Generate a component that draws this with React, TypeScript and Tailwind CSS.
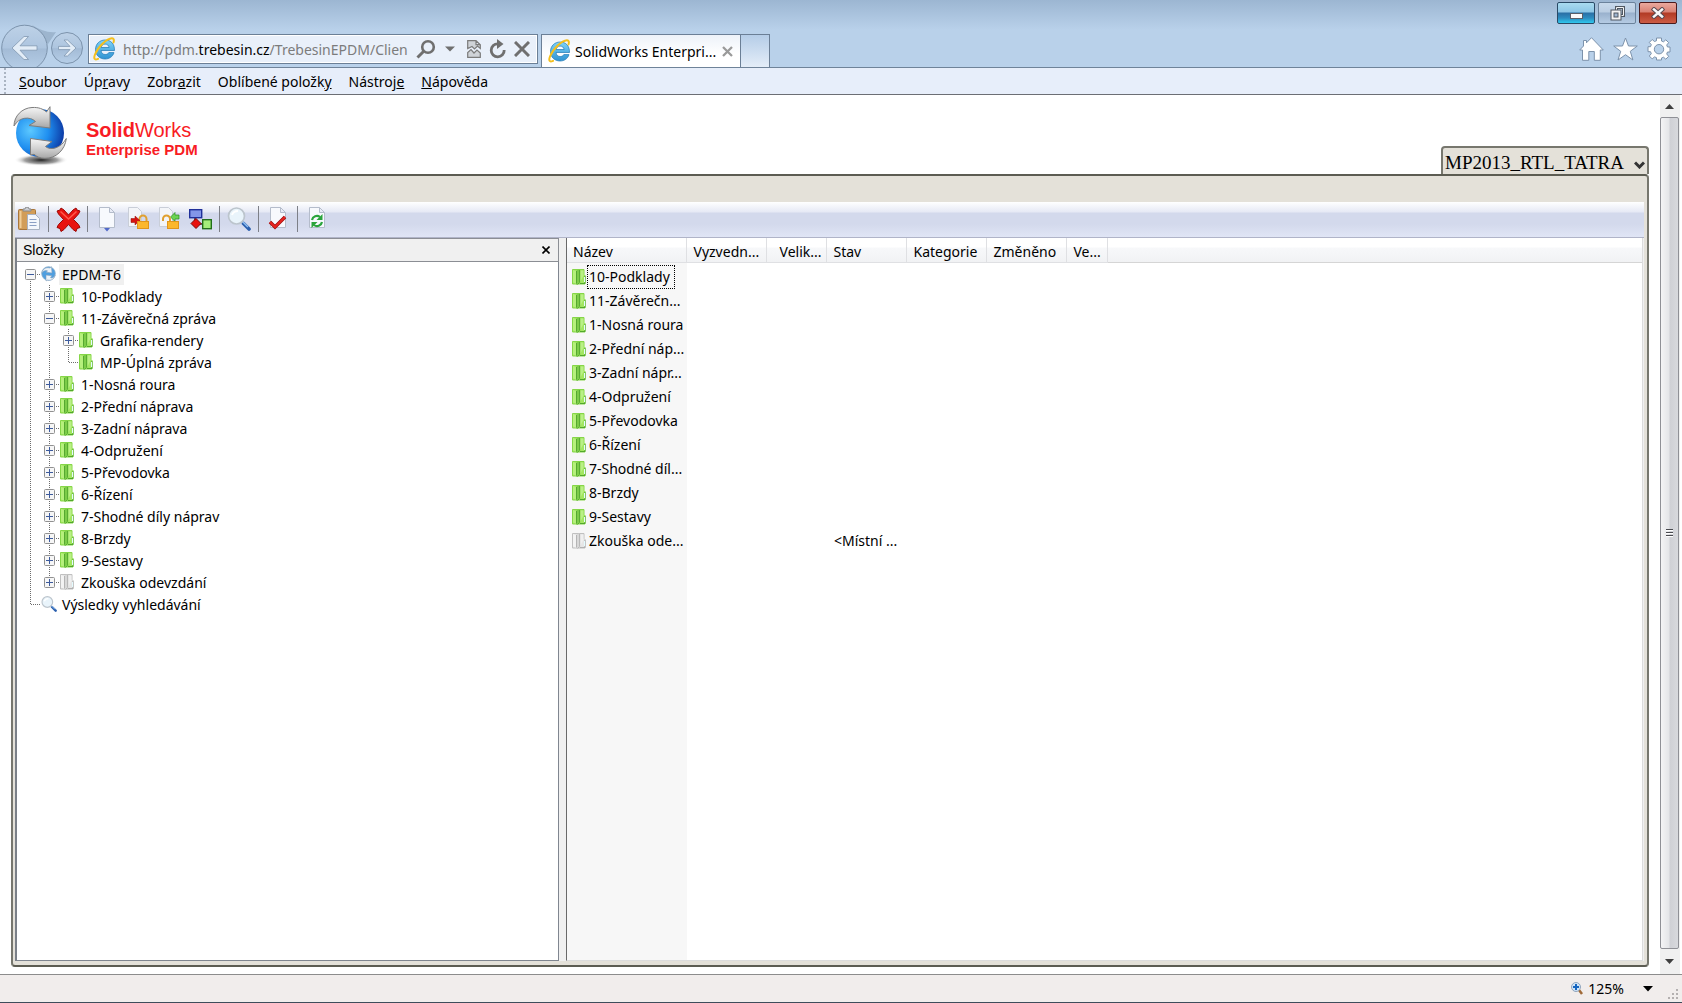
import React from 'react';

interface TreeNode {
    label: string;
    guides: string[]; // One entry per indent cell, last one holds the expander
    icon: 'vault' | 'green' | 'grey' | 'search';
    selected?: boolean;
}

// Guide kinds: line, plus, minus, minusTop (root), plusLast and end (last child without expander)
const treeNodes: TreeNode[] = [
    { label: 'EPDM-T6', guides: ['minusTop'], icon: 'vault', selected: true },
    { label: '10-Podklady', guides: ['line', 'plus'], icon: 'green' },
    { label: '11-Závěrečná zpráva', guides: ['line', 'minus'], icon: 'green' },
    { label: 'Grafika-rendery', guides: ['line', 'line', 'plus'], icon: 'green' },
    { label: 'MP-Úplná zpráva', guides: ['line', 'line', 'end'], icon: 'green' },
    { label: '1-Nosná roura', guides: ['line', 'plus'], icon: 'green' },
    { label: '2-Přední náprava', guides: ['line', 'plus'], icon: 'green' },
    { label: '3-Zadní náprava', guides: ['line', 'plus'], icon: 'green' },
    { label: '4-Odpružení', guides: ['line', 'plus'], icon: 'green' },
    { label: '5-Převodovka', guides: ['line', 'plus'], icon: 'green' },
    { label: '6-Řízení', guides: ['line', 'plus'], icon: 'green' },
    { label: '7-Shodné díly náprav', guides: ['line', 'plus'], icon: 'green' },
    { label: '8-Brzdy', guides: ['line', 'plus'], icon: 'green' },
    { label: '9-Sestavy', guides: ['line', 'plus'], icon: 'green' },
    { label: 'Zkouška odevzdání', guides: ['line', 'plusLast'], icon: 'grey' },
    { label: 'Výsledky vyhledávání', guides: ['end'], icon: 'search' },
];

const files = [
    { name: '10-Podklady', state: '' },
    { name: '11-Závěrečn...', state: '' },
    { name: '1-Nosná roura', state: '' },
    { name: '2-Přední náp...', state: '' },
    { name: '3-Zadní nápr...', state: '' },
    { name: '4-Odpružení', state: '' },
    { name: '5-Převodovka', state: '' },
    { name: '6-Řízení', state: '' },
    { name: '7-Shodné díl...', state: '' },
    { name: '8-Brzdy', state: '' },
    { name: '9-Sestavy', state: '' },
    { name: 'Zkouška ode...', state: '<Místní ...' },
];

const columns = [
    { label: 'Název', className: 'w-[119px] pl-[6px] text-left' },
    { label: 'Vyzvedn...', className: 'w-[80px] pl-[7px] text-left' },
    { label: 'Velik...', className: 'w-[60px] pr-[4px] text-right' },
    { label: 'Stav', className: 'w-[80px] pl-[7px] text-left' },
    { label: 'Kategorie', className: 'w-[80px] pl-[7px] text-left' },
    { label: 'Změněno', className: 'w-[80px] pl-[7px] text-left' },
    { label: 'Ve...', className: 'w-[41px] pl-[7px] text-left' },
];

const FolderIcon: React.FC<{ grey?: boolean }> = ({ grey }) => (
    <svg width="14" height="16" viewBox="0 0 14 16" className="shrink-0">
        <path d="M0.500 0.500h11.500v5l1 1v8.500h-12.500z" fill={grey ? '#e6e6e6' : '#a2e660'} stroke={grey ? '#c0c0c0' : '#86d648'} />
        <path d="M8 14.500h5V7" fill="none" stroke={grey ? '#b0b0b0' : '#52a82c'} />
        <path d="M8.500 1.500h3v5l-3 6z" fill={grey ? '#f0f0f0' : '#b9f086'} />
        <path d="M1 1l3.500 1.200v12.500L1 13.500z" fill={grey ? '#f3f3f3' : '#b6f07c'} />
        <path d="M4 2c.5-.8 2-1.200 3.500-1.200V13L5.500 15.500H4z" fill={grey ? '#d8d8d8' : '#7ccc48'} />
        <path d="M4.500 2v12.500M7.600 1v12.500l-2 2" fill="none" stroke={grey ? '#b4b4b4' : '#55a830'} />
        <path d="M12.500 8v5" stroke="#e4fbff" />
    </svg>
);

const VaultIcon: React.FC<{ size: string }> = ({ size }) => (
    <svg className={size} viewBox="0 0 54 61">
        <defs>
            <radialGradient id="ball" cx="0.3" cy="0.45" r="0.75">
                <stop offset="0" stopColor="#5cc8ff" />
                <stop offset="0.5" stopColor="#1f8ff0" />
                <stop offset="1" stopColor="#0a2f9c" />
            </radialGradient>
            <linearGradient id="steel" x1="0" y1="0" x2="0" y2="1">
                <stop offset="0" stopColor="#f6f6f6" />
                <stop offset="0.5" stopColor="#d2d2d2" />
                <stop offset="1" stopColor="#a6a6a6" />
            </linearGradient>
            <radialGradient id="shade">
                <stop offset="0" stopColor="#222" />
                <stop offset="0.6" stopColor="#777" stopOpacity="0.7" />
                <stop offset="1" stopColor="#fff" stopOpacity="0" />
            </radialGradient>
        </defs>
        <ellipse cx="28" cy="54" rx="27" ry="6" fill="url(#shade)" />
        <circle cx="27" cy="27" r="24" fill="url(#ball)" />
        <path d="M1 20C1 10 9 2 19 1.500c7-.4 11 1.500 14.500 4.500L37 0.700V22l-21-2.500 6.500-4C17 10 6 11 1 20z" fill="url(#steel)" stroke="#7d7d7d" strokeWidth="1" />
        <path d="M53.300 32.500C52 44 43 52.500 32 52.300c-5 0-8-1.500-11-4L17.500 49V32.500L39 35.500l-6.500 5C38 45 48 42 53.300 32.500z" fill="url(#steel)" stroke="#7d7d7d" strokeWidth="1" />
    </svg>
);

const SmallVaultIcon: React.FC = () => (
    <svg width="15" height="16" viewBox="0 0 15 16">
        <circle cx="7.500" cy="7.500" r="6.800" fill="#4f9fe0" stroke="#86a9c8" strokeWidth="0.800" />
        <path d="M1 7C1.500 3 5 .800 9 2l1.500-1.300.5 6.300-6-.8L6.500 5C4.500 4 2 5 1 7z" fill="#eef3f8" stroke="#7f9fbd" strokeWidth="0.600" />
        <path d="M14 9c-.5 4-4 6-7.500 5L5 15V9l6 .8L9.500 11.500c1.500 1 3.500 0 4.500-2.500z" fill="#eef3f8" stroke="#7f9fbd" strokeWidth="0.600" />
    </svg>
);

const SearchIcon: React.FC<{ size: string }> = ({ size }) => (
    <svg className={size} viewBox="0 0 24 24">
        <path d="M16.500 16.500l5.500 5.500" stroke="#2a5fae" strokeWidth="3.600" strokeLinecap="round" />
        <path d="M15 14l6 6" stroke="#8fbdf0" strokeWidth="1.500" />
        <circle cx="9.500" cy="9" r="8" fill="#e9f4fb" stroke="#bcc5cd" strokeWidth="1.700" />
        <path d="M5 8c1-3 3-4 6-4" stroke="#fff" strokeWidth="2" fill="none" />
    </svg>
);

const IeIcon: React.FC = () => (
    <svg width="22" height="24" viewBox="0 0 22 24" className="shrink-0">
        <defs>
            <linearGradient id="ie" x1="0" y1="0" x2="0" y2="1">
                <stop offset="0" stopColor="#7fd3f7" />
                <stop offset="1" stopColor="#2f93d2" />
            </linearGradient>
        </defs>
        <path
            d="M21.500 13.500H8c.3 2.600 2 4 4.200 4 1.700 0 2.900-.6 3.600-1.900h5.200c-1.200 4-4.600 6.400-8.900 6.400C6.600 22 2.500 18.200 2.500 12.600S6.600 3 12.100 3c5.900 0 9.600 4 9.400 10.500zM8.100 10.500h8c-.3-2.100-1.800-3.400-4-3.400s-3.600 1.300-4 3.400z"
            fill="url(#ie)" stroke="#1c77b5" strokeWidth="0.700"
        />
        <path d="M20.500 5.500c.8-2.600.3-4.300-1.600-4.200C14 1.600 5 9.500 2 17.500c-1.500 4-.6 6 3 4.300" fill="none" stroke="#f4bf1c" strokeWidth="2" strokeLinecap="round" />
    </svg>
);

const Guide: React.FC<{ kind: string }> = ({ kind }) => {
    const top = kind !== 'minusTop';
    const bottom = kind !== 'end' && kind !== 'plusLast';
    const box = kind.startsWith('plus') || kind.startsWith('minus');
    return (
        <svg width="19" height="22" viewBox="0 0 19 22" className="shrink-0">
            <g stroke="#6c6c6c" strokeDasharray="1 1">
                {top && <path d="M9.500 0v11" />}
                {bottom && <path d="M9.500 12v10" />}
                {kind !== 'line' && <path d="M10 11.500h9" />}
            </g>
            {box && (
                <>
                    <rect x="4.500" y="6.500" width="10" height="10" rx="1" fill="#f6f6f6" stroke="#919191" />
                    <path d="M6 11.500h7" stroke="#3c5a9c" />
                    {kind.startsWith('plus') && <path d="M9.500 8v7" stroke="#3c5a9c" />}
                </>
            )}
        </svg>
    );
};

// Blank sheet used by several toolbar icons
const Sheet: React.FC = () => (
    <path d="M2.500 0.500h10l5 5v15h-15z M12.500 0.500v5h5" fill="#f7f9fd" stroke="#b4bccb" />
);

const Separator: React.FC = () => <span className="mx-[7px] h-[26px] w-px bg-[#7d8088]" />;

const ToolButton: React.FC<{ label: string; children: React.ReactNode }> = ({ label, children }) => (
    <button aria-label={label} className="flex h-[26px] w-6 items-center justify-center">
        {children}
    </button>
);

const Toolbar: React.FC = () => (
    <div className="flex h-9 shrink-0 items-center border-b border-[#b0b4c8] bg-[linear-gradient(to_bottom,#fff_0px,#e6e9f5_10px,#d3d9ec_11px,#d3d9ec_22px,#e0e5f5_35px)] pb-px pl-[2px]">
        <ToolButton label="Vložit">
            <svg width="22" height="24" viewBox="0 0 22 24">
                <rect x="0.500" y="2.500" width="17" height="20" rx="1" fill="#d29d58" stroke="#a8763a" />
                <path d="M2.500 4v17" stroke="#f0cd96" strokeWidth="2" />
                <path d="M5 4h8v-2h-2a2 2 0 0 0-4 0h-2z" fill="#c9ccd2" stroke="#888" />
                <path d="M9.500 7.500h8l4 4v11h-12z" fill="#f4f7fc" stroke="#a9b2c1" />
                <path d="M11.500 12.500h7M11.500 15.500h7M11.500 18.500h7" stroke="#8ca0c4" />
            </svg>
        </ToolButton>
        <Separator />
        <ToolButton label="Odstranit">
            <svg width="25" height="25" viewBox="0 0 25 25" className="shrink-0">
                <path d="M1 4l3-1 1-2 3 2 4.500 5L17 3l3-2 1 2 3 1-1.500 3-5 5.500 5 5 1.500 3-3 1-1 3-3-2-4.500-5-4.500 5-3 2-1-3-3-1 1.500-3 5-5-5-5.500z" fill="#e81310" stroke="#9c0806" />
                <path d="M4.500 4.500l8 7.500 8-7.500" stroke="#ff5a4c" strokeWidth="1.500" fill="none" />
            </svg>
        </ToolButton>
        <Separator />
        <div className="flex gap-[7px]">
            <ToolButton label="Nový">
                <svg width="20" height="25" viewBox="0 0 20 25">
                    <Sheet />
                    <path d="M7 21h6l-3 3.500z" fill="#5169c9" />
                </svg>
            </ToolButton>
            <ToolButton label="Uzamknout">
                <svg width="22" height="24" viewBox="0 0 22 24">
                    <path d="M1.500 0.500h9l4 4v15h-13z" fill="#f3f5f9" stroke="#c9ced8" />
                    <path d="M12.500 14v-2a3.500 3.500 0 0 1 7 0v2" fill="none" stroke="#e0a030" strokeWidth="2" />
                    <path d="M4 11.500h4V9l5 4.500L8 18v-2.500H4z" fill="#d81410" stroke="#8f0a08" strokeWidth="0.500" />
                    <rect x="10.500" y="14.500" width="11" height="7" fill="#fcb72d" stroke="#e0951c" />
                </svg>
            </ToolButton>
            <ToolButton label="Odemknout">
                <svg width="22" height="24" viewBox="0 0 22 24">
                    <path d="M1.500 0.500h9l4 4v15h-13z" fill="#f3f5f9" stroke="#c9ced8" />
                    <path d="M21 12h-4v2.500l-4.500-4.500L17 5.500V8h4z" fill="#6ad452" stroke="#2a8a1d" strokeWidth="0.700" />
                    <path d="M5 14v-2a3.500 3.500 0 0 1 7 0v2" fill="none" stroke="#e0a030" strokeWidth="2" />
                    <rect x="9.500" y="14.500" width="11" height="7" fill="#fcb72d" stroke="#e0951c" />
                </svg>
            </ToolButton>
            <ToolButton label="Změnit stav">
                <svg width="23" height="23" viewBox="0 0 23 23" className="shrink-0">
                    <path d="M6 9v7h10" stroke="#333" strokeWidth="1.500" fill="none" />
                    <rect x="0.700" y="1.700" width="12" height="8" fill="#8296e8" stroke="#20309a" strokeWidth="1.400" />
                    <path d="M7 10.500l5 5-5 5-5-5z" fill="#e8100c" stroke="#7c0705" />
                    <rect x="13.700" y="11.700" width="8.600" height="9" fill="#a5ee7a" stroke="#23701a" strokeWidth="1.400" />
                </svg>
            </ToolButton>
        </div>
        <Separator />
        <ToolButton label="Hledat"><SearchIcon size="h-6 w-6 shrink-0" /></ToolButton>
        <Separator />
        <ToolButton label="Schválit">
            <svg width="20" height="24" viewBox="0 0 20 24">
                <Sheet />
                <path d="M2 15l5 5L17 10" fill="none" stroke="#9c1010" strokeWidth="3.500" />
                <path d="M2 15l5 5L17 10" fill="none" stroke="#e82420" strokeWidth="2" />
            </svg>
        </ToolButton>
        <Separator />
        <ToolButton label="Obnovit">
            <svg width="20" height="24" viewBox="0 0 20 24">
                <Sheet />
                <path d="M5 13a5 5 0 0 1 8-3M15 15a5 5 0 0 1-8 3" fill="none" stroke="#2aa43c" strokeWidth="2.200" />
                <path d="M15.500 7v6h-6zM4.500 21v-6h6z" fill="#2aa43c" />
            </svg>
        </ToolButton>
    </div>
);

const BrowserBar: React.FC = () => (
    <header className="flex h-[68px] shrink-0 justify-between border-b border-[#6f8399] bg-[linear-gradient(to_bottom,#9cb6d2_0px,#b9d1ea_30px)] pr-[2px]">
        <div className="flex items-end">
            <div className="flex h-11 w-[88px] shrink-0 items-end">
                <svg width="86" height="43" viewBox="0 0 86 43" className="shrink-0">
                    <defs>
                        <linearGradient id="nav" x1="0" y1="0" x2="0" y2="1">
                            <stop offset="0" stopColor="#bdd1e7" />
                            <stop offset="0.5" stopColor="#adc5df" />
                            <stop offset="0.52" stopColor="#a3bbd6" />
                            <stop offset="1" stopColor="#b7cfe8" />
                        </linearGradient>
                    </defs>
                    <path d="M32 1c8 5 16 8 24 7l-8 12z" fill="#9db5ce" />
                    <circle cx="24.500" cy="24" r="22.800" fill="url(#nav)" stroke="#7c93ac" />
                    <circle cx="67" cy="24" r="15.500" fill="url(#nav)" stroke="#7c93ac" />
                    <path d="M12 24L24 12.500h4.500L20 21.800h17v4.400H20l8.500 9.300H24z" fill="#e3edf7" stroke="#8097b0" strokeWidth="0.800" />
                    <path d="M76 24l-8.500-8H64l6 6.400H58.500v3.200H70l-6 6.400h3.500z" fill="#e3edf7" stroke="#8097b0" strokeWidth="0.800" />
                </svg>
            </div>
            <div className="mb-[3px] flex h-[30px] w-[450px] items-center border border-[#6b7f96] bg-[#e9f0fa] pr-[7px] pl-1 outline-1 -outline-offset-2 outline-white">
                <IeIcon />
                <p className="ml-2 flex-1 pt-[2px] whitespace-nowrap text-[#7c7c7c]">
                    http://pdm.<span className="text-black">trebesin.cz</span>/TrebesinEPDM/Clien
                </p>
                <button aria-label="Hledat">
                    <svg width="20" height="20" viewBox="0 0 20 20" fill="none" stroke="#6f6f6f">
                        <circle cx="12" cy="8" r="5.800" strokeWidth="2.600" />
                        <path d="M7.500 12.500L1.500 18.500" strokeWidth="3" />
                    </svg>
                </button>
                <button aria-label="Nabídka" className="ml-[9px]">
                    <svg width="10" height="6"><path d="M0 0.500h10L5 5.500z" fill="#6f6f6f" /></svg>
                </button>
                <button aria-label="Kompatibilní zobrazení" className="ml-3">
                    <svg width="14" height="18" viewBox="0 0 14 18" fill="#cfd3d8" stroke="#7b7b7b">
                        <path d="M0.700 8.500V0.700h8.300l4.300 4v3.800L10.500 6l-3 3L5 6.500zM9 0.700v4h4.300" strokeWidth="1.200" />
                        <path d="M0.700 17.300V12.500L4 9.500l3 3.500 3-3 3.300 3v4.300z" strokeWidth="1.200" />
                    </svg>
                </button>
                <button aria-label="Obnovit" className="ml-2">
                    <svg width="17" height="20" viewBox="0 0 17 20">
                        <path d="M9 4.800a6.500 6.500 0 1 0 6.200 6.200" fill="none" stroke="#6f6f6f" strokeWidth="2.800" />
                        <path d="M8 0l6.500 5L8 10z" fill="#6f6f6f" />
                    </svg>
                </button>
                <button aria-label="Zastavit" className="ml-2">
                    <svg width="16" height="16"><path d="M1 1l14 14M15 1L1 15" stroke="#6f6f6f" strokeWidth="3" /></svg>
                </button>
            </div>
            <div className="ml-[3px] flex h-[33px] w-[200px] items-center border border-b-0 border-[#6b7f96] bg-gradient-to-b from-[#edf2f9] to-white to-60% pl-[6px]">
                <IeIcon />
                <span className="ml-[5px] flex-1 pt-[2px] whitespace-nowrap">SolidWorks Enterpri...</span>
                <button aria-label="Zavřít kartu" className="mr-[7px]">
                    <svg width="11" height="11"><path d="M1 1l9 9M10 1l-9 9" stroke="#9a9a9a" strokeWidth="2.300" /></svg>
                </button>
            </div>
            <button aria-label="Nová karta" className="h-[33px] w-[29px] border border-b-0 border-l-0 border-[#6b7f96] bg-gradient-to-b from-[#b5cde8] to-[#e4edf8]" />
        </div>
        <div className="flex flex-col items-end">
            <div className="flex gap-[3px] pt-[2px] pr-[3px]">
                <button aria-label="Minimalizovat" className="flex h-[22px] w-[38px] items-end justify-center rounded-xs border border-[#2a4a66] bg-[linear-gradient(to_bottom,#a9dbf0_0px,#8cc6e6_9px,#2a6fa5_10px,#2c8cc0_15px,#30c8ee_20px)] pb-1">
                    <span className="h-[6px] w-[13px] border border-[#5a5f68] bg-[#fafafa]" />
                </button>
                <button aria-label="Obnovit okno" className="flex h-[22px] w-[38px] items-center justify-center rounded-xs border border-[#6b829b] bg-[linear-gradient(to_bottom,#c8d9eb_0px,#bacde2_9px,#99b1cd_10px,#b5cbe3_20px)]">
                    <svg width="15" height="15" viewBox="0 0 15 15" fill="none">
                        <path d="M6.500 4V1.500h7v8H11" stroke="#505862" strokeWidth="3" />
                        <path d="M6.500 4V1.500h7v8H11" stroke="#f4f4f4" />
                        <rect x="2.500" y="5.500" width="7" height="7" stroke="#505862" strokeWidth="4" />
                        <rect x="2.500" y="5.500" width="7" height="7" stroke="#f4f4f4" strokeWidth="2" />
                    </svg>
                </button>
                <button aria-label="Zavřít" className="flex h-[22px] w-[38px] items-center justify-center rounded-xs border border-[#4b1a1c] bg-[linear-gradient(to_bottom,#eaa99e_0px,#d98173_9px,#b23a24_10px,#cc5c45_20px)]">
                    <svg width="14" height="12" viewBox="0 0 14 12" fill="none" strokeLinecap="square">
                        <path d="M3 2.500l8 7M11 2.500l-8 7" stroke="#5a4a50" strokeWidth="4.500" />
                        <path d="M3 2.500l8 7M11 2.500l-8 7" stroke="#f8f8f8" strokeWidth="2.500" />
                    </svg>
                </button>
            </div>
            <div className="mt-[13px] flex gap-[9px] pr-[9px]">
                <button aria-label="Domů">
                    <svg width="25" height="24" viewBox="0 0 25 24">
                        <path d="M12.500 0.700L24.300 13h-3v10.300h-6V14.500h-5.500v8.800H3.500V13H0.700L4.500 9V3.500h3v2.300z" fill="#fff" stroke="#7c92ab" />
                    </svg>
                </button>
                <button aria-label="Oblíbené">
                    <svg width="25" height="24" viewBox="0 0 25 24">
                        <path d="M12.500 1l3 8h8.800l-7 5.300 2.600 8.700-7.400-5.300L5 23l2.700-8.700-7-5.300h8.800z" fill="#fff" stroke="#7c92ab" />
                    </svg>
                </button>
                <button aria-label="Nástroje">
                    <svg width="24" height="24" viewBox="0 0 24 24">
                        <path
                            d="M9.500 1h5v3l2 .8L18.800 2.800l2.900 2.900-2 2.300.8 2H23v5h-2.500l-.8 2 2 2.300-2.900 2.900-2.300-2-2 .8V23h-5v-2.300l-2-.8-2.300 2-2.900-2.900 2-2.300-.8-2H1v-5h2.500l.8-2-2-2.300 2.900-2.900 2.300 2 2-.8z M12 7.500a4.700 4.700 0 1 0 0 9.400 4.700 4.700 0 0 0 0-9.400z"
                            fill="#fff" stroke="#7c92ab" fillRule="evenodd"
                        />
                    </svg>
                </button>
            </div>
        </div>
    </header>
);

const MenuBar: React.FC = () => (
    <nav className="flex h-[27px] shrink-0 items-center gap-[17px] border-b border-[#6c6e74] bg-[#e7eefa]">
        <span className="h-full w-[6px] border-r-2 border-dotted border-[#aab4c2]" />
        <button className="-ml-1 pt-[2px]"><u>S</u>oubor</button>
        <button className="pt-[2px]">Úp<u>r</u>avy</button>
        <button className="pt-[2px]">Zobr<u>a</u>zit</button>
        <button className="pt-[2px]">Oblíbené položk<u>y</u></button>
        <button className="pt-[2px]">Nástroj<u>e</u></button>
        <button className="pt-[2px]"><u>N</u>ápověda</button>
    </nav>
);

const FolderTree: React.FC = () => (
    <section className="flex w-[544px] shrink-0 flex-col border-l-2 border-[#7b8088]">
        <div className="flex h-6 items-center justify-between border-t border-r border-b border-[#8b8e94] bg-[#f0f0f0] pr-2 pl-[6px] font-['Liberation_Sans'] text-sm">
            <h2>Složky</h2>
            <button aria-label="Zavřít panel">
                <svg width="8" height="8"><path d="M0.500 0.500l7 7M7.500 0.500l-7 7" stroke="#000" strokeWidth="1.600" /></svg>
            </button>
        </div>
        <ul className="flex-1 border-r border-b border-[#808690] bg-white pt-px pl-1">
            {treeNodes.map((node) => (
                <li key={node.label} className="flex h-[22px] items-center">
                    {node.guides.map((kind, index) => (
                        <Guide key={index} kind={kind} />
                    ))}
                    <span className="flex w-[19px] shrink-0 items-center pl-px">
                        {node.icon === 'vault' && <SmallVaultIcon />}
                        {node.icon === 'search' && <SearchIcon size="h-4 w-4" />}
                        {node.icon === 'green' && <FolderIcon />}
                        {node.icon === 'grey' && <FolderIcon grey />}
                    </span>
                    <span className={`px-[3px] leading-[21px] ${node.selected ? 'bg-[#f0f0f0]' : ''}`}>{node.label}</span>
                </li>
            ))}
        </ul>
    </section>
);

const FileList: React.FC = () => (
    <section className="mr-px flex min-w-0 flex-1 border-r border-b border-l border-r-[#dcdcdc] border-b-[#dcdcdc] border-l-[#696969] bg-[linear-gradient(to_right,#f7f7f7_120px,#fff_120px)]">
        <table className="h-fit w-full table-fixed border-collapse">
            <thead>
                <tr className="h-6 bg-[linear-gradient(to_bottom,#fff_9px,#f7f8fa_10px,#f1f2f4_24px)]">
                    {columns.map((column) => (
                        <th key={column.label} className={`border-r border-b border-[#dfe0e3] p-0 pt-1 leading-[19px] font-normal whitespace-nowrap ${column.className}`}>
                            {column.label}
                        </th>
                    ))}
                    <th aria-label="Prázdný sloupec" className="border-b border-[#d5d5d5]" />
                </tr>
            </thead>
            <tbody>
                <tr className="h-[3px]"><td /></tr>
                {files.map((file, index) => (
                    <tr key={file.name} className="h-6">
                        <td className="p-0">
                            <div className="flex items-center gap-px pl-[5px]">
                                <FolderIcon grey={file.state !== ''} />
                                <span className={`border border-dotted pr-1 pl-px leading-[22px] whitespace-nowrap ${index === 0 ? 'border-black' : 'border-transparent'}`}>
                                    {file.name}
                                </span>
                            </div>
                        </td>
                        <td />
                        <td />
                        <td className="p-0 pl-2 whitespace-nowrap">{file.state}</td>
                        <td />
                        <td />
                        <td />
                        <td />
                    </tr>
                ))}
            </tbody>
        </table>
    </section>
);

const ScrollBar: React.FC = () => (
    <div className="flex w-[20px] shrink-0 flex-col bg-[#f0f0f0]">
        <button aria-label="Nahoru" className="flex h-[22px] items-center justify-center pr-[2px]">
            <svg width="9" height="5"><path d="M4.500 0L9 5H0z" fill="#404040" /></svg>
        </button>
        <div className="flex w-[19px] flex-1 flex-col items-center justify-center gap-px rounded-xs border border-[#8f9096] bg-[linear-gradient(to_right,#f4f4f5_0px,#e4e5e8_8px,#cfd0d5_9px,#d8d9dd_17px)]">
            <span className="h-[2px] w-[7px] border-b border-white bg-[#4a4b50]" />
            <span className="h-[2px] w-[7px] border-b border-white bg-[#4a4b50]" />
            <span className="h-[2px] w-[7px] border-b border-white bg-[#4a4b50]" />
        </div>
        <button aria-label="Dolů" className="flex h-[25px] items-center justify-center pr-[2px]">
            <svg width="9" height="5"><path d="M4.500 5L9 0H0z" fill="#404040" /></svg>
        </button>
    </div>
);

const App: React.FC = () => {
    return (
        <div className="flex h-screen flex-col overflow-hidden bg-white font-['Noto_Sans','Open_Sans',sans-serif] text-sm text-black">
            <BrowserBar />
            <MenuBar />
            <div className="flex min-h-0 flex-1 pr-[2px]">
                <main className="flex min-w-0 flex-1 flex-col px-[11px] pb-[7px]">
                    <div className="flex h-[79px] shrink-0 items-end justify-between">
                        <div className="flex h-full items-start gap-[19px] pt-[11px] pl-[2px]">
                            <VaultIcon size="h-[61px] w-[54px]" />
                            <h1 className="pt-[11px] font-['Liberation_Sans'] text-[#f81c24]">
                                <span className="block text-xl leading-[26px]"><b>Solid</b>Works</span>
                                <span className="block text-[15px] leading-[13px] font-bold">Enterprise PDM</span>
                            </h1>
                        </div>
                        <div className="relative">
                            <select
                                aria-label="Trezor"
                                className="block h-7 w-[208px] appearance-none rounded-t-sm border-2 border-b-0 border-[#77776e] bg-[#e4e1d9] pt-[2px] pl-[2px] font-['Liberation_Serif'] text-[19px] leading-none"
                            >
                                <option>MP2013_RTL_TATRA</option>
                            </select>
                            <svg width="11" height="8" viewBox="0 0 11 8" className="pointer-events-none absolute right-1 bottom-[5px]">
                                <path d="M1 1.500l4.500 4.500L10 1.500" fill="none" stroke="#333" strokeWidth="3" />
                            </svg>
                        </div>
                    </div>
                    <div className="flex min-h-0 flex-1 flex-col rounded-t-sm rounded-b-sm border-2 border-[#77776e] border-t-[#5c5c52] border-b-[#5c5c52] bg-[#e4e1d9] pr-[3px] pb-1 pl-[2px]">
                        <div className="h-[26px] shrink-0" />
                        <Toolbar />
                        <div className="flex min-h-0 flex-1 bg-[#f0f0f0]">
                            <FolderTree />
                            <div className="w-[7px] shrink-0" />
                            <FileList />
                        </div>
                    </div>
                </main>
                <ScrollBar />
            </div>
            <footer className="flex h-[29px] shrink-0 items-center justify-end gap-[19px] border-t border-b border-t-[#8c8c8c] border-b-[#3e4c5a] bg-[#f1edec] pr-[2px]">
                <button className="flex items-center gap-[5px]">
                    <svg width="12" height="13" viewBox="0 0 12 13">
                        <path d="M8 8l3 4" stroke="#a06a38" strokeWidth="2.500" />
                        <circle cx="5" cy="5" r="4.500" fill="#cfe4f8" stroke="#8fa4bc" />
                        <path d="M5 2v6M2 5h6" stroke="#1565c0" strokeWidth="2" />
                    </svg>
                    125%
                </button>
                <button aria-label="Změnit lupu">
                    <svg width="10" height="6"><path d="M0 0h10L5 5.500z" fill="#000" /></svg>
                </button>
                <svg width="14" height="14" viewBox="0 0 14 14" fill="#b4b0b0" className="-ml-[6px] self-end">
                    <path d="M10 1h2v2h-2zM10 5h2v2h-2zM10 9h2v2h-2zM6 5h2v2H6zM6 9h2v2H6zM2 9h2v2H2z" />
                </svg>
            </footer>
        </div>
    );
};

export default App;
